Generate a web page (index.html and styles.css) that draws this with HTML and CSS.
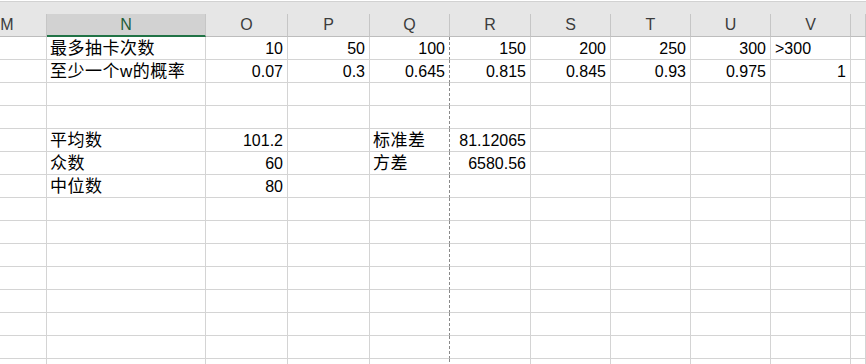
FILE: index.html
```html
<!DOCTYPE html>
<html lang="zh-CN">
<head>
    <meta charset="UTF-8">
    <meta name="viewport" content="width=device-width, initial-scale=1.0">
    <title>抽卡概率</title>
    <link rel="stylesheet" href="styles.css">
</head>
<body>
    <!-- Ribbon edge above the column headers -->
    <div class="topbar"></div>

    <!-- Worksheet grid, filled by the script below -->
    <div class="sheet" id="sheet"></div>

    <script>
        const cols = ['M', 'N', 'O', 'P', 'Q', 'R', 'S', 'T', 'U', 'V', ''];

        // One entry per row, one value per column (M..W)
        const rows = [
            ['', '最多抽卡次数', 10, 50, 100, 150, 200, 250, 300, '>300', ''],
            ['', '至少一个w的概率', 0.07, 0.3, 0.645, 0.815, 0.845, 0.93, 0.975, 1, ''],
            [],
            [],
            ['', '平均数', 101.2, '', '标准差', 81.12065],
            ['', '众数', 60, '', '方差', 6580.56],
            ['', '中位数', 80]
        ];
        const totalRows = 15;

        const sheet = document.getElementById('sheet');

        cols.forEach(function (name) {
            const cell = document.createElement('div');
            cell.className = 'hd' + (name === 'N' ? ' sel' : '');
            cell.textContent = name;
            sheet.appendChild(cell);
        });

        for (let r = 0; r < totalRows; r++) {
            const row = rows[r] || [];
            for (let c = 0; c < cols.length; c++) {
                const value = row[c];
                const cell = document.createElement('div');
                cell.className = 'c';
                if (cols[c] === 'Q') cell.className += ' brk';
                if (typeof value === 'number') {
                    cell.className += ' num';
                } else if (value && /[\u4e00-\u9fff]/.test(value)) {
                    cell.className += ' zh';
                }
                cell.textContent = value === undefined ? '' : value;
                sheet.appendChild(cell);
            }
        }
    </script>
</body>
</html>
```

FILE: styles.css
```css
html, body {
    margin: 0;
    padding: 0;
    background: #ffffff;
    overflow: hidden;
}

body {
    font-family: "Liberation Sans", Arial, "Noto Sans CJK SC", sans-serif;
    font-size: 16px;
    color: #000000;
    padding-top: 1px;
}

.topbar {
    height: 12px;
    background: #e6e6e6;
    border-top: 1px solid #d2d2d2;
}

/* Column M is scrolled partly out of view on the left */
.sheet {
    display: grid;
    grid-template-columns: 79px 159px 82px 82px 80px 81px 80px 80px 80px 80px 1fr;
    margin-left: -32px;
}

/* Column headers */
.hd {
    box-sizing: border-box;
    height: 23px;
    background: #e6e6e6;
    border-right: 1px solid #c6c6c6;
    border-bottom: 1px solid #bdbdbd;
    text-align: center;
    line-height: 21px;
    color: #3c3c3c;
    overflow: hidden;
}

.hd.sel {
    background: #d2d2d2;
    border-bottom: 2px solid #217346;
    color: #1e5e3a;
}

/* Cells */
.c {
    box-sizing: border-box;
    height: 23px;
    padding: 2px 3px 0 4px;
    line-height: 20px;
    border-right: 1px solid #d4d4d4;
    border-bottom: 1px solid #d4d4d4;
    white-space: nowrap;
    overflow: hidden;
}

.c.num {
    text-align: right;
    padding-right: 4px;
}

.c.zh {
    font-size: 17px;
    letter-spacing: 0.5px;
    padding-left: 3px;
}

/* Page break after column Q */
.c.brk {
    border-right: 1px dashed #8a8a8a;
}
```
